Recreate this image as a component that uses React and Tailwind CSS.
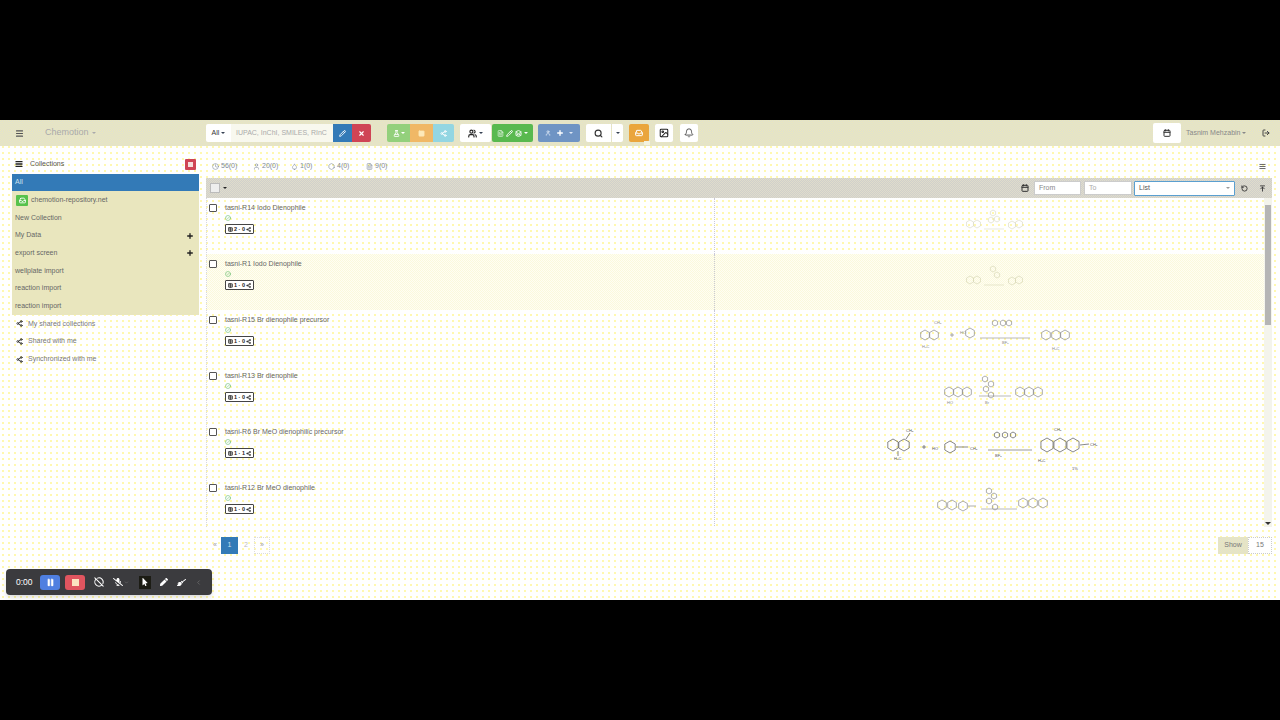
import { Menu, Pencil, X, Share2, Users, FileText, Plus, Search, Inbox, Image, Bell, Calendar, LogOut, AlignJustify, RotateCcw, ArrowUpToLine, CircleCheck, ChevronDown, Pause, Square, CircleOff, Layers, User, Droplet, Hexagon, FlaskConical, ChevronLeft, Clock, Table } from 'lucide-react';
import { FaBroom, FaPen, FaMicrophoneSlash, FaMousePointer } from 'react-icons/fa';

const checker = 'bg-[repeating-conic-gradient(#dfdfd2_0_25%,#ecE9ba_0_50%)] bg-[length:2px_2px]';
const hiChecker = 'bg-[repeating-conic-gradient(#fbf9dc_0_25%,#fffef4_0_50%)] bg-[length:2px_2px]';
const barChecker = 'bg-[repeating-conic-gradient(#d0d0cc_0_25%,#e0dccb_0_50%)] bg-[length:2px_2px]';
const dots = 'bg-[radial-gradient(circle,#fff8b0_0.8px,transparent_1px)] bg-[length:6px_6px]';

function Caret({ className = 'text-gray-700' }) {
  return <span className={`inline-block w-0 h-0 border-x-[2px] border-x-transparent border-t-[2px] ${className} border-t-current`} />;
}

function SideRow({ label, plus }) {
  return (
    <div className="h-[17.7px] flex items-center justify-between pl-[3px] pr-[5px] text-[7px] text-[#666]">
      <span>{label}</span>
      {plus && <Plus size={8} strokeWidth={4} className="text-[#222]" />}
    </div>
  );
}

function ShareRow({ label }) {
  return (
    <div className="h-[17.6px] flex items-center gap-[5px] pl-[4px] text-[7px] text-[#777]">
      <Share2 size={7} strokeWidth={3} className="text-[#333]" />
      <span>{label}</span>
    </div>
  );
}

function Tab({ icon: Icon, label, className }) {
  return (
    <span className={`flex items-center gap-[2px] text-[#7d8a99] ${className}`}>
      <Icon size={7} strokeWidth={2} />
      {label}
    </span>
  );
}

// one ring of a structure drawing
function Ring({ x, y, r = 7 }) {
  const k = r * 0.866;
  const pts = [[x, y - r], [x + k, y - r / 2], [x + k, y + r / 2], [x, y + r], [x - k, y + r / 2], [x - k, y - r / 2]];
  return <polygon points={pts.map(p => p.join(',')).join(' ')} fill="none" stroke="currentColor" strokeWidth="0.7" />;
}

function Scheme({ w, h, rings, arrow, labels = [], extra = [], tone = 'text-[#8a8a8a]' }) {
  return (
    <svg width={w} height={h} viewBox={`0 0 ${w} ${h}`} className={tone}>
      {rings.map((r, i) => <Ring key={i} x={r[0]} y={r[1]} r={r[2] || 7} />)}
      {arrow && <line x1={arrow[0]} y1={arrow[2]} x2={arrow[1]} y2={arrow[2]} stroke="currentColor" strokeWidth="0.6" />}
      {extra.map((l, i) => <line key={i} x1={l[0]} y1={l[1]} x2={l[2]} y2={l[3]} stroke="currentColor" strokeWidth="0.7" />)}
      {labels.map((l, i) => <text key={i} x={l[0]} y={l[1]} fontSize="4" fill="currentColor">{l[2]}</text>)}
    </svg>
  );
}

const rows = [
  {
    title: 'tasni-R14 Iodo Dienophile', badge: '2 · 0',
    scheme: { w: 68, h: 32, tone: 'text-[#dcdcc8]', rings: [[14, 22, 4], [21, 22, 4], [37, 11, 3], [41, 17, 3], [35, 18, 3], [56, 23, 4], [63, 22, 4]], arrow: [28, 48, 27] },
  },
  {
    title: 'tasni-R1 Iodo Dienophile', badge: '1 · 0', hi: true,
    scheme: { w: 68, h: 32, tone: 'text-[#d8d8b8]', rings: [[14, 22, 4], [21, 22, 4], [37, 11, 3], [41, 17, 3], [56, 23, 4], [63, 22, 4]], arrow: [28, 48, 27] },
  },
  {
    title: 'tasni-R15 Br dienophile precursor', badge: '1 · 0',
    scheme: {
      w: 160, h: 42, rings: [[15, 21, 5], [24, 21, 5], [60, 19, 5], [85, 9, 3], [93, 9, 3], [99, 9, 3], [136, 21, 5], [146, 21, 5], [155, 21, 5]], arrow: [70, 120, 24],
      labels: [[12, 34, 'H₃C'], [24, 10, 'CH₃'], [50, 20, 'HO'], [92, 30, 'BF₃'], [142, 36, 'H₃C']], extra: [[40, 21, 44, 21], [42, 19, 42, 23]],
    },
  },
  {
    title: 'tasni-R13 Br dienophile', badge: '1 · 0',
    scheme: {
      w: 110, h: 38, rings: [[14, 22, 5], [23, 22, 5], [32, 22, 5], [50, 9, 3], [56, 14, 3], [51, 19, 3], [56, 25, 3], [85, 22, 5], [94, 22, 5], [103, 22, 5]], arrow: [44, 76, 26],
      labels: [[12, 34, 'HO'], [50, 34, 'Br']],
    },
  },
  {
    title: 'tasni-R6 Br MeO dienophilic precursor', badge: '1 · 1', strong: true,
    scheme: {
      w: 216, h: 46, tone: 'text-[#555]', rings: [[11, 19, 6], [22, 19, 6], [68, 21, 6], [115, 9, 3], [123, 9, 3], [131, 9, 3], [165, 19, 7], [178, 19, 7], [191, 19, 7]], arrow: [106, 150, 24],
      labels: [[24, 6, 'CH₃'], [12, 34, 'H₃C'], [50, 24, 'HO'], [88, 24, 'CH₃'], [113, 31, 'BF₃'], [172, 5, 'CH₃'], [208, 20, 'CH₃'], [156, 36, 'H₃C'], [190, 44, '1%']],
      extra: [[40, 21, 44, 21], [42, 19, 42, 23], [24, 13, 28, 7], [16, 25, 16, 30], [74, 21, 86, 21], [198, 19, 207, 18]],
    },
  },
  {
    title: 'tasni-R12 Br MeO dienophile', badge: '1 · 0',
    scheme: {
      w: 118, h: 36, rings: [[11, 23, 5], [21, 23, 5], [32, 24, 5], [58, 9, 3], [63, 14, 3], [58, 19, 3], [64, 25, 3], [92, 21, 5], [102, 21, 5], [112, 21, 5]], arrow: [50, 86, 27],
      extra: [[37, 24, 45, 24]],
    },
  },
];

function Row({ r }) {
  return (
    <div className={`h-[56px] shrink-0 flex ${r.hi ? hiChecker : ''}`}>
      <div className="w-[508px] shrink-0 flex border-r border-dotted border-[#c9c9d8] pl-[2px] pt-[6px]">
        <span className="w-[8px] h-[8px] border border-[#555] rounded-[1px] bg-white shrink-0" />
        <div className="ml-[8px]">
          <div className="text-[7px] leading-[8px] text-[#666] whitespace-nowrap">{r.title}</div>
          <CircleCheck size={6} strokeWidth={2.5} className="text-[#6fbf73] mt-[3px] mb-[3px]" />
          <div className="h-[10px] w-[29px] border border-[#444] rounded-[1px] flex items-center justify-center gap-[1px] text-[5.5px] font-bold text-[#222] bg-white">
            <Table size={5} strokeWidth={3} />
            <span>{r.badge}</span>
            <Share2 size={5} strokeWidth={3} />
          </div>
        </div>
      </div>
      <div className="flex-1 flex items-start justify-center pt-[4px]">
        <Scheme {...r.scheme} />
      </div>
    </div>
  );
}

export default function App() {
  return (
    <div className="h-screen bg-black py-[120px] font-['Liberation_Sans',sans-serif] overflow-hidden">
      <div className={`relative h-[480px] bg-white flex flex-col ${dots}`}>
        {/* navbar */}
        <nav className={`h-[26px] shrink-0 flex items-center ${checker}`}>
          <Menu size={9} strokeWidth={3} className="ml-[15px] text-[#555]" />
          <span className="ml-[21px] w-[161px] text-[9px] text-[#aaa] flex items-center gap-[3px]">Chemotion <Caret className="text-[#aaa]" /></span>

          <div className="flex items-center h-[18px]">
            <span className="w-[25px] h-full bg-white rounded-l-[2px] text-[7px] text-[#333] flex items-center justify-center gap-[2px]">All <Caret /></span>
            <span className="w-[102px] h-full bg-[#f8f8ee] text-[7px] text-[#aaa] flex items-center pl-[5px] whitespace-nowrap overflow-hidden">IUPAC, InChI, SMILES, RInC</span>
            <span className="w-[19px] h-full bg-[#337ab7] flex items-center justify-center"><Pencil size={7} strokeWidth={3} className="text-white" /></span>
            <span className="w-[19px] h-full bg-[#cf4455] rounded-r-[2px] flex items-center justify-center"><X size={7} strokeWidth={4} className="text-white" /></span>
          </div>

          <div className="ml-[16px] flex items-center h-[18px]">
            <span className="w-[23px] h-full bg-[#93d07c] rounded-l-[2px] flex items-center justify-center gap-[1px]"><FlaskConical size={7} className="text-white" strokeWidth={3} /><Caret className="text-white" /></span>
            <span className="w-[23px] h-full bg-[#f0b866] flex items-center justify-center"><Square size={7} className="text-[#fde9b8]" fill="currentColor" /></span>
            <span className="w-[21px] h-full bg-[#93d6e2] rounded-r-[2px] flex items-center justify-center"><Share2 size={7} className="text-white" strokeWidth={3} /></span>
          </div>

          <span className="ml-[6px] w-[31px] h-[18px] bg-white rounded-[2px] flex items-center justify-center gap-[2px]"><Users size={9} strokeWidth={3} className="text-[#222]" /><Caret /></span>
          <span className="ml-[1px] w-[41px] h-[18px] bg-[#59b94f] rounded-[2px] flex items-center justify-center gap-[2px] text-white">
            <FileText size={7} strokeWidth={2} /><Pencil size={7} strokeWidth={3} /><Layers size={7} strokeWidth={3} /><Caret className="text-white" />
          </span>
          <span className="ml-[5px] w-[42px] h-[18px] bg-[#6f94c4] rounded-[2px] flex items-center justify-center gap-[5px] text-[#dfe8f5]">
            <User size={6} strokeWidth={3} /><Plus size={8} strokeWidth={4} className="text-white" /><Caret className="text-[#dfe8f5]" />
          </span>

          <span className="ml-[6px] w-[25px] h-[18px] bg-white rounded-l-[2px] flex items-center justify-center"><Search size={9} strokeWidth={3} className="text-[#333]" /></span>
          <span className="ml-[1px] w-[11px] h-[18px] bg-white rounded-r-[2px] flex items-center justify-center"><Caret /></span>

          <span className="ml-[6px] relative w-[20px] h-[18px] bg-[#eaa53c] rounded-[2px] flex items-center justify-center">
            <Inbox size={8} strokeWidth={3} className="text-white" />
            <span className="absolute -bottom-[3px] right-[-1px] w-[6px] h-[4px] bg-[#f2f2e0]" />
          </span>
          <span className="ml-[6px] w-[18px] h-[18px] bg-white rounded-[2px] flex items-center justify-center"><Image size={10} strokeWidth={2.5} className="text-[#222]" /></span>
          <span className="ml-[7px] w-[18px] h-[18px] bg-white rounded-[2px] flex items-center justify-center"><Bell size={10} strokeWidth={1.8} className="text-[#222]" /></span>

          <div className="flex-1" />
          <span className="w-[28px] h-[20px] bg-white rounded-[2px] flex items-center justify-center"><Calendar size={8} strokeWidth={3} className="text-[#333]" /></span>
          <span className="ml-[5px] w-[76px] text-[7px] text-[#888] flex items-center gap-[2px] whitespace-nowrap">Tasnim Mehzabin <Caret className="text-[#888]" /></span>
          <LogOut size={8} strokeWidth={3} className="text-[#444] mr-[10px]" />
        </nav>

        <div className="flex-1 flex min-h-0">
          {/* sidebar */}
          <aside className="w-[187px] ml-[12px] shrink-0">
            <div className="h-[28px] flex items-center pt-[8px] justify-between pr-[3px]">
              <span className="flex items-center gap-[7px] pl-[3px] text-[7px] text-[#555]">
                <AlignJustify size={8} strokeWidth={4} className="text-[#222]" />Collections
              </span>
              <span className="w-[11px] h-[11px] bg-[#cf4455] rounded-[1px] flex items-center justify-center"><span className="w-[5px] h-[5px] bg-[#f5dcdc]" /></span>
            </div>
            <div className="h-[17px] bg-[#337ab7] text-[7px] text-[#cfe0ee] flex items-center pl-[3px]">All</div>
            <div className="bg-[#e9e6be]">
              <div className="h-[18px] flex items-center gap-[3px] pl-[4px] text-[7px] text-[#666]">
                <span className="w-[12px] h-[11px] bg-[#58c24c] rounded-[1px] flex items-center justify-center"><Inbox size={7} strokeWidth={3} className="text-white" /></span>
                chemotion-repository.net
              </div>
              <SideRow label="New Collection" />
              <SideRow label="My Data" plus />
              <SideRow label="export screen" plus />
              <SideRow label="wellplate import" />
              <SideRow label="reaction import" />
              <SideRow label="reaction import" />
            </div>
            <div>
              <ShareRow label="My shared collections" />
              <ShareRow label="Shared with me" />
              <ShareRow label="Synchronized with me" />
            </div>
          </aside>

          {/* main */}
          <main className="ml-[7px] w-[1066px] shrink-0 flex flex-col">
            <div className="h-[32px] flex items-center justify-between pr-[6px] text-[7px] pt-[9px]">
              <div className="flex items-center pl-[6px]">
                <Tab icon={Clock} label="56(0)" className="w-[41px]" />
                <Tab icon={User} label="20(0)" className="w-[38px]" />
                <Tab icon={Droplet} label="1(0)" className="w-[37px]" />
                <Tab icon={Hexagon} label="4(0)" className="w-[38px]" />
                <Tab icon={FileText} label="9(0)" />
              </div>
              <AlignJustify size={7} strokeWidth={3} className="text-[#555]" />
            </div>

            <div className={`h-[20px] shrink-0 flex items-center ${barChecker}`}>
              <span className="ml-[4px] w-[22px] h-[13px] flex items-center gap-[3px]">
                <span className="w-[10px] h-[10px] border border-[#bbb] bg-[#eee]" />
                <Caret className="text-[#222]" />
              </span>
              <div className="flex-1" />
              <Calendar size={8} strokeWidth={3} className="text-[#333] mr-[5px]" />
              <span className="w-[47px] h-[14px] bg-white border border-[#ccc] text-[7px] text-[#888] flex items-center pl-[4px]">From</span>
              <span className="ml-[3px] w-[48px] h-[14px] bg-white border border-[#ccc] text-[7px] text-[#aaa] flex items-center pl-[4px]">To</span>
              <span className="ml-[2px] w-[101px] h-[15px] bg-white border border-[#5a9fd0] rounded-[1px] text-[7px] text-[#555] flex items-center justify-between px-[4px]">List <Caret className="text-[#999]" /></span>
              <RotateCcw size={7} strokeWidth={3} className="ml-[6px] text-[#333]" />
              <ArrowUpToLine size={7} strokeWidth={3} className="ml-[11px] mr-[6px] text-[#333]" />
            </div>

            <div className="h-[329px] shrink-0 flex border-l border-dotted border-[#d6d6e2]">
              <div className="flex-1 overflow-hidden flex flex-col">
                {rows.map(r => <Row key={r.title} r={r} />)}
              </div>
              <div className="w-[8px] shrink-0 bg-[#f4f4ec] flex flex-col items-center">
                <span className="h-[7px]" />
                <span className="w-[6px] h-[120px] bg-[#b5b5b5]" />
                <div className="flex-1" />
                <span className="mb-[2px] w-0 h-0 border-x-[3px] border-x-transparent border-t-[3px] border-t-[#333]" />
              </div>
            </div>

            <div className="flex items-center justify-between mt-[10px]">
              <div className="flex items-center ml-[3px] h-[17px] text-[7px] text-[#999]">
                <span className="w-[12px] text-center">«</span>
                <span className="w-[17px] h-full bg-[#337ab7] text-[#cfe0ee] flex items-center justify-center">1</span>
                <span className="w-[16px] text-center text-[#bbb]">2</span>
                <span className="w-[16px] h-full border border-dotted border-[#ddd] flex items-center justify-center">»</span>
              </div>
              <div className="flex items-center h-[17px] text-[7px]">
                <span className={`w-[30px] h-full flex items-center justify-center text-[#777] ${checker}`}>Show</span>
                <span className="w-[24px] h-full border border-dotted border-[#ccc] bg-white flex items-center justify-center text-[#777]">15</span>
              </div>
            </div>
          </main>
        </div>

        {/* recorder overlay */}
        <div className="absolute left-[6px] top-[449px] w-[206px] h-[26px] bg-[#3b3b3e] rounded-[4px] shadow-md flex items-center text-white">
          <span className="ml-[10px] w-[24px] text-[8.5px]">0:00</span>
          <span className="w-[20px] h-[15px] bg-[#4f7fe0] rounded-[3px] flex items-center justify-center"><Pause size={9} fill="currentColor" strokeWidth={1} /></span>
          <span className="ml-[5px] w-[20px] h-[15px] bg-[#e0555f] rounded-[3px] flex items-center justify-center"><span className="w-[7px] h-[7px] bg-[#fbe3c0]" /></span>
          <CircleOff size={10} strokeWidth={2.5} className="ml-[9px]" />
          <FaMicrophoneSlash size={10} className="ml-[9px]" />
          <ChevronDown size={5} className="ml-[1px] text-[#888]" />
          <span className="ml-[10px] w-[12px] h-[13px] bg-[#1c1c14] flex items-center justify-center"><FaMousePointer size={8} /></span>
          <FaPen size={8} className="ml-[9px]" />
          <FaBroom size={9} className="ml-[9px]" />
          <ChevronLeft size={7} strokeWidth={3} className="ml-[9px] text-[#666]" />
        </div>
      </div>
    </div>
  );
}
